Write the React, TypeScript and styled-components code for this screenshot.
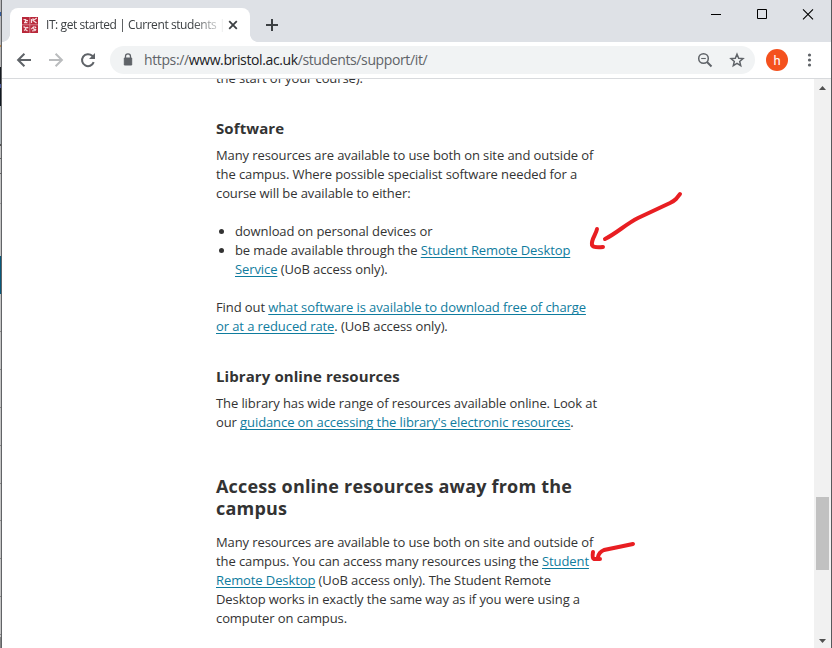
import React from "react";
import styled, { createGlobalStyle } from "styled-components";

const GlobalStyle = createGlobalStyle`
  * { box-sizing: border-box; }
  body { margin: 0; background: #fff; overflow: hidden; }
`;

const Screen = styled.div`
  position: relative;
  display: grid;
  grid-template-columns: 2px minmax(0, 1fr) 1px;
  width: 832px;
  height: 648px;
  overflow: hidden;
  font-family: "Open Sans", "Noto Sans", sans-serif;
`;

const LeftSliver = styled.div`
  display: flex;
  flex-direction: column;
  height: 648px;
  overflow: hidden;
  border-right: 1px solid #616366;
`;

const SliverPart = styled.div<{ $h: number; $c: string }>`
  flex: 0 0 ${(p) => p.$h}px;
  background: ${(p) => p.$c};
`;

const RightEdge = styled.div`
  background: #56585b;
`;

const Window = styled.div`
  display: flex;
  flex-direction: column;
  min-width: 0;
  height: 648px;
  background: #fff;
`;

const TitleBar = styled.header`
  display: flex;
  height: 42px;
  background: #dee1e6;
`;

const Tab = styled.div`
  position: relative;
  display: flex;
  align-items: center;
  width: 240px;
  height: 34px;
  margin: 8px 0 0 8px;
  padding: 0 0 0 12px;
  border-radius: 8px 8px 0 0;
  background: #fff;
  svg { display: block; flex: none; }
  &::before,
  &::after {
    content: "";
    position: absolute;
    bottom: 0;
    width: 8px;
    height: 8px;
  }
  &::before {
    left: -8px;
    background: radial-gradient(circle at 0 0, #dee1e6 7.6px, #fff 8.2px);
  }
  &::after {
    right: -8px;
    background: radial-gradient(circle at 100% 0, #dee1e6 7.6px, #fff 8.2px);
  }
`;

const TabTitle = styled.span`
  flex: 0 0 178px;
  margin-left: 8px;
  white-space: nowrap;
  font-size: 12px;
  line-height: 18px;
  letter-spacing: -0.42px;
  color: #3c4043;
  mask-image: linear-gradient(to right, #000 146px, transparent 180px);
`;

const TabClose = styled.span`
  display: flex;
`;

const NewTab = styled.span`
  display: flex;
  align-items: center;
  margin: 8px 0 0 15px;
`;

const WindowButtons = styled.div`
  display: flex;
  margin-left: auto;
  svg { display: block; }
`;

const Toolbar = styled.nav`
  display: flex;
  align-items: center;
  height: 37px;
  padding-left: 12px;
  border-bottom: 1px solid #d8dadd;
  svg { display: block; flex: none; }
`;

const NavIcons = styled.div`
  display: flex;
  gap: 12px;
  width: 96px;
`;

const AddressBar = styled.div`
  display: flex;
  align-items: center;
  width: 645px;
  height: 28px;
  padding: 0 8px 0 12px;
  border-radius: 14px;
  background: #f1f3f4;
`;

const Url = styled.span`
  flex: 1;
  margin-left: 10px;
  font-size: 14px;
  line-height: 20px;
  letter-spacing: -0.38px;
  white-space: nowrap;
  color: #5f6368;
`;

const Host = styled.span`
  color: #202124;
`;

const BarIcons = styled.div`
  display: flex;
  gap: 12px;
`;

const Avatar = styled.span`
  width: 22px;
  height: 22px;
  margin: 0 11px;
  border-radius: 50%;
  background: #f4511e;
  color: #fff;
  font: 13px/23px Roboto, sans-serif;
  text-align: center;
`;

const Viewport = styled.div`
  display: flex;
  flex: 1;
  min-height: 0;
`;

const Article = styled.main`
  flex: 1;
  overflow: hidden;
  padding-left: 214px;
  color: #333;
  font-size: 13px;
  line-height: 19px;
  letter-spacing: -0.095px;
`;

const Paragraph = styled.p<{ $gap?: number }>`
  margin: 0 0 ${(p) => p.$gap ?? 19}px;
`;

const Line = styled.span`
  display: block;
  white-space: nowrap;
`;

const Clipped = styled(Paragraph)`
  margin-top: -10px;
`;

const Heading3 = styled.h3`
  margin: 0 0 8px;
  font-size: 15px;
  line-height: 20px;
  font-weight: 700;
  letter-spacing: 0.09px;
`;

const Heading2 = styled.h2`
  margin: 0 0 14px;
  font-size: 18px;
  line-height: 22px;
  font-weight: 700;
  letter-spacing: 0.2px;
`;

const List = styled.ul`
  margin: 0 0 19px;
  padding-left: 19px;
`;

const Link = styled.a`
  color: #0f7c9e;
  text-decoration: underline;
  text-decoration-thickness: 1px;
  text-underline-offset: 2px;
  text-decoration-skip-ink: none;
`;

const ScrollTrack = styled.div`
  display: flex;
  flex-direction: column;
  align-items: center;
  justify-content: space-between;
  width: 17px;
  padding: 7px 0 5px;
  background: #f1f1f1;
  svg { display: block; }
`;

const ScrollThumb = styled.div`
  width: 13px;
  height: 73px;
  margin-top: 337px;
  background: #c1c1c1;
`;

const Annotations = styled.svg`
  position: absolute;
  left: 0;
  top: 0;
  pointer-events: none;
`;

const sliver: [number, string][] = [
  [12, "#b9b9bb"], [4, "#335a9c"], [29, "#b9b9bb"], [2, "#b98850"], [20, "#b4b4b5"],
  [17, "#151a20"], [4, "#4b5a9a"], [18, "#101820"], [38, "#a8b0b4"], [2, "#555"],
  [12, "#c3c3c3"], [1, "#666"], [14, "#c3c3c3"], [1, "#666"], [29, "#c4c4c4"],
  [1, "#999"], [52, "#c4c4c4"], [38, "#08587a"], [37, "#c4c4c4"], [1, "#888"],
  [37, "#c4c4c4"], [1, "#888"], [37, "#c4c4c4"], [1, "#888"], [37, "#c4c4c4"],
  [1, "#888"], [37, "#c4c4c4"], [1, "#888"], [36, "#c4c4c4"], [1, "#888"],
  [37, "#c4c4c4"], [1, "#888"], [37, "#c4c4c4"], [1, "#888"], [37, "#c4c4c4"],
  [1, "#888"], [2, "#c4c4c4"], [11, "#858585"],
];

const Favicon = () => (
  <svg width="16" height="16" viewBox="0 0 16 16">
    <rect width="16" height="16" fill="#b8283a" />
    <path d="M7.8 0v16M0 7.8h16" stroke="#d88a94" strokeWidth=".9" />
    <g fill="none" stroke="#f6dde0" strokeWidth="1.2">
      <path d="M1.5 2.5h2l1 1.2H6M2 5.6h3.4M3.4 3v3" />
      <path d="M9.5 2v4M14.8 1l-3.6 2.6 3.3 2.3M11 1.2v2" />
      <path d="M1.5 10.2c1-.8 1.8.5 2.2 1.3.6-1.6 2-1.5 2.4-.2M2 13.5l1.5-1 2 1.5" />
      <path d="M9.3 12.2l2-2 .8 2.3 2.2.2M10 14l3.8-.6M12.5 9.5l1.6 1.5" />
    </g>
  </svg>
);

export default function App() {
  return (
    <>
      <GlobalStyle />
      <Screen>
        <LeftSliver>
          {sliver.map(([h, c], i) => <SliverPart key={i} $h={h} $c={c} />)}
        </LeftSliver>
        <Window>
          <TitleBar>
            <Tab>
              <Favicon />
              <TabTitle>IT: get started | Current students |</TabTitle>
              <TabClose>
                <svg width="16" height="16" viewBox="0 0 16 16" stroke="#3c4043" strokeWidth="1.8">
                  <path d="M4.2 4.2l7.6 7.6M11.8 4.2l-7.6 7.6" />
                </svg>
              </TabClose>
            </Tab>
            <NewTab>
              <svg width="14" height="14" viewBox="0 0 14 14" stroke="#3c4043" strokeWidth="2">
                <path d="M7 1v12M1 7h12" />
              </svg>
            </NewTab>
            <WindowButtons>
              <svg width="138" height="28" viewBox="693 0 138 28" fill="none" stroke="#000">
                <path d="M711 14.5h10" />
                <path d="M757.5 9.5h9v9h-9z" />
                <path d="M803 9.3l10 10M813 9.3l-10 10" strokeWidth="1.1" />
              </svg>
            </WindowButtons>
          </TitleBar>
          <Toolbar>
            <NavIcons>
              <svg width="20" height="20" viewBox="0 0 20 20" fill="none" stroke="#5f6368" strokeWidth="2">
                <path d="M17 10H4.2M10.4 3.7L4.1 10l6.3 6.3" />
              </svg>
              <svg width="20" height="20" viewBox="0 0 20 20" fill="none" stroke="#babcbe" strokeWidth="2">
                <path d="M3 10h12.8M9.6 3.7l6.3 6.3-6.3 6.3" />
              </svg>
              <svg width="20" height="20" viewBox="0 0 20 20" fill="none" stroke="#5f6368" strokeWidth="2">
                <path d="M15.7 12.2A6 6 0 1 1 14.2 5.8L16 7.6" />
                <path d="M17 3v6h-6z" fill="#5f6368" stroke="none" />
              </svg>
            </NavIcons>
            <AddressBar>
              <svg width="12" height="14" viewBox="0 0 12 14">
                <path d="M2.3 5h7.4v7H2.3z" fill="#5f6368" stroke="#5f6368" strokeLinejoin="round" />
                <path d="M3.5 5V3.4a2.5 2.5 0 0 1 5 0V5" fill="none" stroke="#5f6368" strokeWidth="1.3" />
              </svg>
              <Url>https://<Host>www.bristol.ac.uk</Host>/students/support/it/</Url>
              <BarIcons>
                <svg width="20" height="20" viewBox="0 0 20 20" fill="none" stroke="#5f6368" strokeWidth="1.5">
                  <circle cx="8.5" cy="8.5" r="4.8" />
                  <path d="M12 12l4.5 4.5" strokeWidth="1.9" />
                  <path d="M6.2 8.5h4.6" strokeWidth="1.1" />
                </svg>
                <svg width="20" height="20" viewBox="0 0 20 20" fill="none" stroke="#5f6368" strokeWidth="1.5">
                  <path d="M10 4.2l1.7 4 4.3.4-3.3 2.8 1 4.2-3.7-2.2-3.7 2.2 1-4.2L4 8.6l4.3-.4z" />
                </svg>
              </BarIcons>
            </AddressBar>
            <Avatar>h</Avatar>
            <svg width="20" height="20" viewBox="0 0 20 20" fill="#5f6368">
              <circle cx="10.5" cy="5" r="1.6" />
              <circle cx="10.5" cy="10" r="1.6" />
              <circle cx="10.5" cy="15" r="1.6" />
            </svg>
          </Toolbar>
          <Viewport>
            <Article>
              <Clipped $gap={30}><Line>the start of your course).</Line></Clipped>
              <Heading3><Line>Software</Line></Heading3>
              <Paragraph>
                <Line>Many resources are available to use both on site and outside of</Line>
                <Line>the campus. Where possible specialist software needed for a</Line>
                <Line>course will be available to either:</Line>
              </Paragraph>
              <List>
                <li><Line>download on personal devices or</Line></li>
                <li>
                  <Line>be made available through the <Link>Student Remote Desktop</Link></Line>
                  <Line><Link>Service</Link> (UoB access only).</Line>
                </li>
              </List>
              <Paragraph $gap={30}>
                <Line>Find out <Link>what software is available to download free of charge</Link></Line>
                <Line><Link>or at a reduced rate</Link>. (UoB access only).</Line>
              </Paragraph>
              <Heading3><Line>Library online resources</Line></Heading3>
              <Paragraph $gap={43}>
                <Line>The library has wide range of resources available online. Look at</Line>
                <Line>our <Link>guidance on accessing the library's electronic resources</Link>.</Line>
              </Paragraph>
              <Heading2>
                <Line>Access online resources away from the</Line>
                <Line>campus</Line>
              </Heading2>
              <Paragraph $gap={0}>
                <Line>Many resources are available to use both on site and outside of</Line>
                <Line>the campus. You can access many resources using the <Link>Student</Link></Line>
                <Line><Link>Remote Desktop</Link> (UoB access only). The Student Remote</Line>
                <Line>Desktop works in exactly the same way as if you were using a</Line>
                <Line>computer on campus.</Line>
              </Paragraph>
            </Article>
            <ScrollTrack>
              <svg width="7" height="4" viewBox="0 0 7 4"><path d="M0 4L3.5 0 7 4z" fill="#505050" /></svg>
              <ScrollThumb />
              <svg width="7" height="4" viewBox="0 0 7 4"><path d="M0 0L3.5 4 7 0z" fill="#505050" /></svg>
            </ScrollTrack>
          </Viewport>
        </Window>
        <RightEdge />
        <Annotations width="832" height="648" viewBox="0 0 832 648" fill="none" stroke="#e81e22" strokeWidth="4" strokeLinecap="round" strokeLinejoin="round">
          <path d="M680 194L676 199Q674 201 670 203L638 218C626 224 617 233 605 239" />
          <path d="M597 229C596 235 591 239 592 245Q593 248 603 247" />
          <path d="M633 544L604 550Q599 552 598 557" />
          <path d="M593 552Q592 558 594 559L600 559" />
        </Annotations>
      </Screen>
    </>
  );
}
